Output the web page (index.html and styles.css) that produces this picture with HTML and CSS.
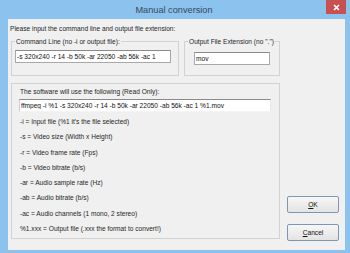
FILE: index.html
```html
<!DOCTYPE html>
<html lang="en">
<head>
    <meta charset="UTF-8">
    <title>Manual conversion</title>
    <link rel="stylesheet" href="styles.css">
</head>
<body>
    <div class="window">
        <div class="titlebar">
            <span class="title">Manual conversion</span>
            <div class="close">
                <svg width="7" height="7" viewBox="0 0 7 7">
                    <path d="M1 1 L6 6 M6 1 L1 6" stroke="#fff" stroke-width="1.6"/>
                </svg>
            </div>
        </div>

        <div class="client">
            <div class="main">
                <div class="prompt">Please input the command line and output file extension:</div>

                <div class="row">
                    <fieldset class="group group-cmd">
                        <legend>Command Line (no -i or output file):</legend>
                        <input class="field field-cmd" type="text" value="-s 320x240 -r 14 -b 50k -ar 22050 -ab 56k -ac 1">
                    </fieldset>
                    <fieldset class="group group-ext">
                        <legend>Output File Extension (no ".")</legend>
                        <input class="field field-ext" type="text" value="mov">
                    </fieldset>
                </div>

                <!-- read only part -->
                <fieldset class="group group-info">
                    <div class="info-label">The software will use the following (Read Only):</div>
                    <input class="field field-ro" type="text" readonly value="ffmpeg -i %1 -s 320x240 -r 14 -b 50k -ar 22050 -ab 56k -ac 1 %1.mov">
                    <ul class="help">
                        <li>-i = Input file (%1 it's the file selected)</li>
                        <li>-s = Video size (Width x Height)</li>
                        <li>-r = Video frame rate (Fps)</li>
                        <li>-b = Video bitrate (b/s)</li>
                        <li>-ar = Audio sample rate (Hz)</li>
                        <li>-ab = Audio bitrate (b/s)</li>
                        <li>-ac = Audio channels (1 mono, 2 stereo)</li>
                        <li>%1.xxx = Output file (.xxx the format to convert!)</li>
                    </ul>
                </fieldset>
            </div>

            <div class="actions">
                <button class="btn btn-default"><u>O</u>K</button>
                <button class="btn"><u>C</u>ancel</button>
            </div>
        </div>
    </div>
</body>
</html>
```

FILE: styles.css
```css
body {
    margin: 0;
    background-color: #8cc2ee;
    font-family: "Liberation Sans", Arial, sans-serif;
}
.window {
    width: 350px;
    height: 253px;
    display: flex;
    flex-direction: column;
}
.titlebar {
    position: relative;
    height: 19px;
    display: flex;
    justify-content: center;
    align-items: center;
}
.title {
    font-size: 9.2px;
    color: #37485a;
    margin-left: -2px;
}
.close {
    position: absolute;
    top: 0;
    right: 4px;
    width: 20px;
    height: 14px;
    background-color: #c75050;
    display: flex;
    justify-content: center;
    align-items: center;
}
.client {
    flex: 1;
    margin: 0 5px 3px 8px;
    padding: 0 6px 9px 3px;
    background-color: #f0f0f0;
    display: flex;
    font-size: 6.6px;
    color: #262626;
}
.main {
    width: 269px;
    display: flex;
    flex-direction: column;
}
.prompt {
    margin: 6px 0 0 -1px;
    line-height: 8px;
}
.row {
    display: flex;
    gap: 5px;
    margin-top: 4px;
}
.group {
    margin: 0;
    border: 1px solid #d2d2d2;
    box-sizing: border-box;
    min-width: 0;
}
.group legend {
    padding: 0 1px;
    margin-left: 1px;
    line-height: 9px;
    white-space: nowrap;
}
.group-cmd {
    width: 168px;
    padding: 4px 2px 12px 2px;
}
.group-ext {
    width: 96px;
    padding: 6px 2px 10px 2px;
}
.field {
    display: block;
    box-sizing: border-box;
    height: 13px;
    margin: 0;
    padding: 0 1px;
    font-family: "Liberation Sans", Arial, sans-serif;
    font-size: 6.6px;
    color: #111;
    background-color: #fff;
    border: 1px solid #a8a8a8;
    border-top-color: #8a8a8a;
    outline: none;
}
.field-cmd {
    width: 156px;
    margin-left: 1px;
}
.field-ext {
    width: 76px;
    margin-left: 7px;
}
.group-info {
    margin-top: 7px;
    height: 156px;
    padding: 4px 8px 0 8px;
}
.info-label {
    line-height: 8px;
}
.field-ro {
    width: 252px;
    margin: 3px 0 0 -1px;
    border-color: #8a8a8a #e6e6e6 #f4f4f4 #cfcfcf;
}
.help {
    list-style: none;
    margin: 2px 0 0 0;
    padding: 0;
    line-height: 15.25px;
}
.actions {
    margin-left: 7px;
    display: flex;
    flex-direction: column;
    justify-content: flex-end;
    gap: 11px;
}
.btn {
    width: 52px;
    height: 17px;
    margin: 0;
    padding: 0;
    font-family: "Liberation Sans", Arial, sans-serif;
    font-size: 6.6px;
    color: #111;
    border: 1px solid #7d97b2;
    border-radius: 2px;
    background: linear-gradient(#f7f7f7, #e3e3e3);
}
```
